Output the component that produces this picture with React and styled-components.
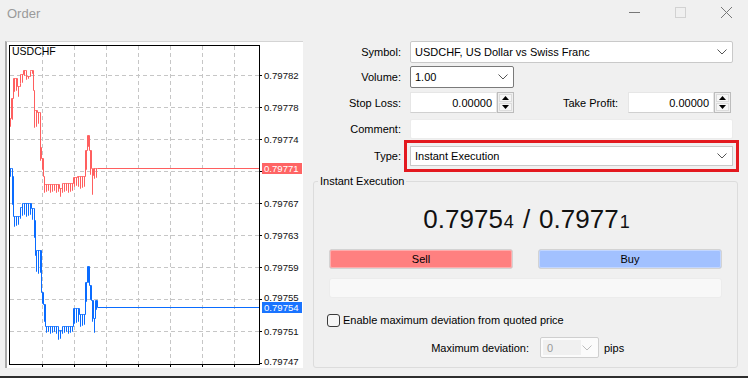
import styled, { createGlobalStyle } from 'styled-components';

const GlobalStyle = createGlobalStyle`
  html, body { margin: 0; padding: 0; background: #f0f0f0; }
  body { font-family: "Liberation Sans", Arial, sans-serif; font-size: 11px; color: #000; }
  * { box-sizing: border-box; }
`;

// price series: [x0, x1, tip, base] -> line runs at base with spikes to tip every 2px
const redSegs = [
  [10, 10, 126, 118], [11, 12, 120, 98], [13, 16, 90, 78], [17, 19, 97, 86],
  [20, 22, 82, 74], [23, 25, 76, 70], [26, 29, 78, 76], [30, 32, 72, 70],
  [33, 33, 92, 90], [34, 36, 127, 110], [37, 39, 122, 112], [40, 40, 160, 147],
  [41, 42, 170, 158], [43, 43, 188, 176], [44, 58, 191, 184], [59, 61, 197, 188],
  [62, 72, 191, 183], [73, 76, 185, 177], [77, 84, 187, 176], [85, 86, 168, 150],
  [87, 88, 146, 135], [89, 90, 175, 150], [91, 91, 180, 168], [92, 92, 193, 175],
  [93, 96, 178, 168], [97, 97, 168, 168],
];

const blueSegs = [
  [10, 11, 176, 168], [12, 12, 205, 176], [13, 19, 225, 216], [20, 21, 217, 207],
  [22, 30, 215, 203], [31, 33, 218, 208], [34, 34, 237, 220], [35, 35, 265, 255],
  [36, 40, 272, 250], [41, 42, 304, 292], [43, 44, 320, 304], [45, 57, 332, 326],
  [58, 61, 339, 330], [62, 72, 332, 326], [73, 78, 322, 308], [79, 84, 325, 314],
  [85, 86, 300, 282], [87, 88, 282, 266], [89, 90, 300, 285], [91, 92, 320, 300],
  [93, 94, 332, 318], [95, 96, 310, 300], [97, 97, 307, 307],
];

function buildPath(segs, end) {
  const first = segs[0];
  const last = segs[segs.length - 1];
  let d = `M${first[0] + 0.5} ${first[3] + 0.5}`;
  segs.forEach(([x0, x1, tip, base]) => {
    for (let x = x0; x <= x1; x++) {
      const px = x + 0.5;
      if ((x - first[0]) % 2 === 0) {
        const t = tip + (((x * 7) % 3) - 1);
        d += ` H${px} V${t + 0.5} V${base + 0.5}`;
      } else {
        d += ` H${px} V${base + 0.5}`;
      }
    }
  });
  return d + ` V${last[3] + 0.5} H${end}`;
}

function Chart() {
  const vGrid = [42, 74, 106, 138, 170, 202, 234];
  const hGrid = [75, 107, 139, 171, 203, 235, 267, 299, 331];
  const labels = [
    [75, '0.79782'], [107, '0.79778'], [139, '0.79774'], [203, '0.79767'],
    [235, '0.79763'], [267, '0.79759'], [297, '0.79755'], [331, '0.79751'], [361, '0.79747'],
  ];
  return (
    <svg width="296" height="326" viewBox="7 42 296 326" style={{ display: 'block' }}>
      {vGrid.map((x) => (
        <line key={'v' + x} x1={x + 0.5} y1={46} x2={x + 0.5} y2={364} stroke="#c6c6c6" strokeDasharray="4 3" />
      ))}
      {hGrid.map((y) => (
        <line key={'h' + y} x1={10} y1={y + 0.5} x2={259} y2={y + 0.5} stroke="#c6c6c6" strokeDasharray="4 3" />
      ))}
      {vGrid.map((x) => (
        <line key={'t' + x} x1={x + 0.5} y1={364} x2={x + 0.5} y2={367} stroke="#000" />
      ))}
      {[...hGrid, 363].map((y) => (
        <line key={'r' + y} x1={259} y1={y + 0.5} x2={262} y2={y + 0.5} stroke="#000" />
      ))}
      <rect x="9.5" y="45.5" width="250" height="319" fill="none" stroke="#000" />
      <text x="12" y="55" fontSize="10.5" fontFamily="Liberation Sans, Arial, sans-serif">USDCHF</text>
      <path d={buildPath(redSegs, 259)} fill="none" stroke="#ff5f5f" strokeWidth="1" />
      <path d={buildPath(blueSegs, 259)} fill="none" stroke="#0a6cff" strokeWidth="1" />
      {labels.map(([y, t]) => (
        <text key={t} x="264" y={y + 3.5} fontSize="9.6" fontFamily="Liberation Sans, Arial, sans-serif" fill="#111">{t}</text>
      ))}
      <rect x="262" y="163" width="40" height="11" fill="#ff6464" />
      <text x="264" y="171.5" fontSize="9.6" fill="#fff" fontFamily="Liberation Sans, Arial, sans-serif">0.79771</text>
      <rect x="262" y="302" width="40" height="11" fill="#1a74ff" />
      <text x="264" y="310.5" fontSize="9.6" fill="#fff" fontFamily="Liberation Sans, Arial, sans-serif">0.79754</text>
    </svg>
  );
}

function Chevron({ color = '#555' }) {
  return (
    <svg width="10" height="6" viewBox="0 0 10 6">
      <polyline points="0.5,0.5 5,5 9.5,0.5" fill="none" stroke={color} strokeWidth="1" />
    </svg>
  );
}

function Spin() {
  return (
    <SpinBox>
      <SpinHalf>
        <svg width="7" height="4" viewBox="0 0 7 4"><polygon points="0,4 3.5,0 7,4" fill="#000" /></svg>
      </SpinHalf>
      <SpinHalf>
        <svg width="7" height="4" viewBox="0 0 7 4"><polygon points="0,0 3.5,4 7,0" fill="#000" /></svg>
      </SpinHalf>
    </SpinBox>
  );
}

export default function App() {
  return (
    <>
      <GlobalStyle />
      <Window>
        <TitleBar>
          <Title>Order</Title>
          <Controls>
            <CtrlButton>
              <svg width="11" height="11" viewBox="0 0 11 11"><line x1="0" y1="5.5" x2="11" y2="5.5" stroke="#777" /></svg>
            </CtrlButton>
            <CtrlButton>
              <svg width="11" height="11" viewBox="0 0 11 11"><rect x="0.5" y="0.5" width="10" height="10" fill="none" stroke="#d2d2d2" /></svg>
            </CtrlButton>
            <CtrlButton>
              <svg width="11" height="11" viewBox="0 0 11 11">
                <line x1="0" y1="0" x2="11" y2="11" stroke="#777" />
                <line x1="11" y1="0" x2="0" y2="11" stroke="#777" />
              </svg>
            </CtrlButton>
          </Controls>
        </TitleBar>

        <Body>
          <ChartPanel>
            <Chart />
          </ChartPanel>

          <Form>
            <Row>
              <Label>Symbol:</Label>
              <Select $width={323}>
                <span>USDCHF, US Dollar vs Swiss Franc</span>
                <Chevron />
              </Select>
            </Row>
            <Row $top={3}>
              <Label>Volume:</Label>
              <Select $width={104} $dark>
                <span>1.00</span>
                <Chevron />
              </Select>
            </Row>
            <Row $top={4} $h={21}>
              <Label>Stop Loss:</Label>
              <SpinField $width={104}>
                <NumInput>0.00000</NumInput>
                <Spin />
              </SpinField>
              <Label $width={104} $gap={10}>Take Profit:</Label>
              <SpinField $width={103}>
                <NumInput>0.00000</NumInput>
                <Spin />
              </SpinField>
            </Row>
            <Row $top={6} $h={20}>
              <Label>Comment:</Label>
              <TextBox $width={323} />
            </Row>
            <Row $top={7} $h={20}>
              <Label>Type:</Label>
              <Select $width={323} $highlight>
                <span>Instant Execution</span>
                <Chevron />
              </Select>
            </Row>

            <Group>
              <Legend>Instant Execution</Legend>
              <GroupBody>
                <Price>
                  <Big>0.7975</Big><Small>4</Small>
                  <Slash>/</Slash>
                  <Big>0.7977</Big><Small>1</Small>
                </Price>
                <Buttons>
                  <TradeButton $color="#ff8080">Sell</TradeButton>
                  <TradeButton $color="#a2c1ff">Buy</TradeButton>
                </Buttons>
                <Progress />
                <CheckRow>
                  <Checkbox />
                  <span>Enable maximum deviation from quoted price</span>
                </CheckRow>
                <DevRow>
                  <Label $width={200} $gap={11}>Maximum deviation:</Label>
                  <DisabledSelect>
                    <DisabledValue>0</DisabledValue>
                    <Chevron color="#bdbdbd" />
                  </DisabledSelect>
                  <Pips>pips</Pips>
                </DevRow>
              </GroupBody>
            </Group>
          </Form>
        </Body>
        <BottomEdge />
      </Window>
    </>
  );
}

const Window = styled.div`
  width: 748px;
  height: 378px;
  background: #f0f0f0;
  display: flex;
  flex-direction: column;
  overflow: hidden;
`;

const TitleBar = styled.div`
  height: 41px;
  flex-shrink: 0;
  display: flex;
  justify-content: space-between;
  align-items: flex-start;
`;

const Title = styled.div`
  font-size: 13px;
  color: #9a9a9a;
  padding: 6px 0 0 7px;
`;

const Controls = styled.div`
  display: flex;
`;

const CtrlButton = styled.div`
  width: 46px;
  height: 30px;
  display: flex;
  align-items: center;
  justify-content: center;
  padding: 0 0 6px 3px;
`;

const Body = styled.div`
  flex: 1;
  display: flex;
  padding-left: 5px;
  gap: 7px;
`;

const ChartPanel = styled.div`
  width: 298px;
  height: 327px;
  background: #fff;
  border-left: 2px solid #a9a9a9;
  border-top: 1px solid #d4d4d4;
`;

const Form = styled.div`
  width: 438px;
  display: flex;
  flex-direction: column;
`;

const Row = styled.div`
  display: flex;
  align-items: center;
  height: ${(p) => p.$h || 22}px;
  margin-top: ${(p) => p.$top || 0}px;
`;

const Label = styled.div`
  width: ${(p) => p.$width || 91}px;
  margin-right: ${(p) => p.$gap || 9}px;
  text-align: right;
  font-size: 11px;
  white-space: nowrap;
`;

const Select = styled.div`
  width: ${(p) => p.$width}px;
  height: 100%;
  background: #fff;
  border: 1px solid ${(p) => (p.$dark ? '#7a7a7a' : '#c9c9c9')};
  border-radius: ${(p) => (p.$highlight ? 0 : 2)}px;
  display: flex;
  align-items: center;
  justify-content: space-between;
  padding: 0 5px 0 4px;
  font-size: 11px;
  outline: ${(p) => (p.$highlight ? '3px solid #e3191f' : 'none')};
  outline-offset: 3px;
`;

const SpinField = styled.div`
  width: ${(p) => p.$width}px;
  height: 100%;
  display: flex;
`;

const NumInput = styled.div`
  flex: 1;
  background: #fff;
  border: 1px solid #e6e6e6;
  border-bottom-color: #d0d0d0;
  display: flex;
  align-items: center;
  justify-content: flex-end;
  padding-right: 4px;
  font-size: 11px;
`;

const SpinBox = styled.div`
  width: 17px;
  height: 100%;
  border: 1px solid #bcbcbc;
  background: #f0f0f0;
  display: flex;
  flex-direction: column;
  padding: 1px;
  gap: 1px;
`;

const SpinHalf = styled.div`
  flex: 1;
  border: 1px solid #dcdcdc;
  background: #f6f6f6;
  display: flex;
  align-items: center;
  justify-content: center;
`;

const TextBox = styled.div`
  width: ${(p) => p.$width}px;
  height: 100%;
  background: #fff;
  border: 1px solid #ececec;
  border-radius: 2px;
`;

const Group = styled.fieldset`
  margin: 8px 0 0 3px;
  padding: 0;
  width: 425px;
  height: 194px;
  border: 1px solid #dcdcdc;
  border-radius: 3px;
  min-width: 0;
`;

const Legend = styled.legend`
  margin-left: 4px;
  padding: 0 2px;
  font-size: 11px;
  line-height: 14px;
`;

const GroupBody = styled.div`
  padding: 0 15px;
  display: flex;
  flex-direction: column;
`;

const Price = styled.div`
  margin-top: 16px;
  height: 30px;
  display: flex;
  align-items: baseline;
  justify-content: center;
  padding-left: 2px;
  color: #111;
`;

const Big = styled.span`
  font-size: 26px;
`;

const Small = styled.span`
  font-size: 18px;
  margin-left: 1px;
`;

const Slash = styled.span`
  font-size: 26px;
  margin: 0 9px;
`;

const Buttons = styled.div`
  margin-top: 15px;
  display: flex;
  justify-content: space-between;
`;

const TradeButton = styled.div`
  width: 184px;
  height: 20px;
  background: ${(p) => p.$color};
  border: 1px solid #d3d3d3;
  border-radius: 3px;
  box-shadow: inset 0 0 0 1px rgba(255, 255, 255, 0.35);
  display: flex;
  align-items: center;
  justify-content: center;
  font-size: 11px;
`;

const Progress = styled.div`
  margin-top: 9px;
  height: 20px;
  background: #f8f8f8;
  border-radius: 3px;
  border: 1px solid #ececec;
`;

const CheckRow = styled.div`
  margin: 15px 0 0 -2px;
  height: 14px;
  display: flex;
  align-items: center;
  gap: 3px;
  font-size: 11px;
`;

const Checkbox = styled.div`
  width: 13px;
  height: 13px;
  border: 1px solid #3a3a3a;
  border-radius: 3px;
  background: #f6f6f6;
`;

const DevRow = styled.div`
  margin-top: 10px;
  height: 21px;
  display: flex;
  align-items: center;
`;

const DisabledSelect = styled.div`
  width: 59px;
  height: 100%;
  border: 1px solid #cfcfcf;
  border-radius: 2px;
  background: #fbfbfb;
  display: flex;
  align-items: center;
  justify-content: space-between;
  padding: 2px 6px 2px 2px;
`;

const DisabledValue = styled.div`
  width: 38px;
  height: 100%;
  background: #f0f0f0;
  color: #9a9a9a;
  font-size: 11px;
  display: flex;
  align-items: center;
  padding-left: 4px;
`;

const Pips = styled.span`
  margin-left: 5px;
  font-size: 11px;
`;

const BottomEdge = styled.div`
  height: 2px;
  flex-shrink: 0;
  background: #2e2e2e;
`;
